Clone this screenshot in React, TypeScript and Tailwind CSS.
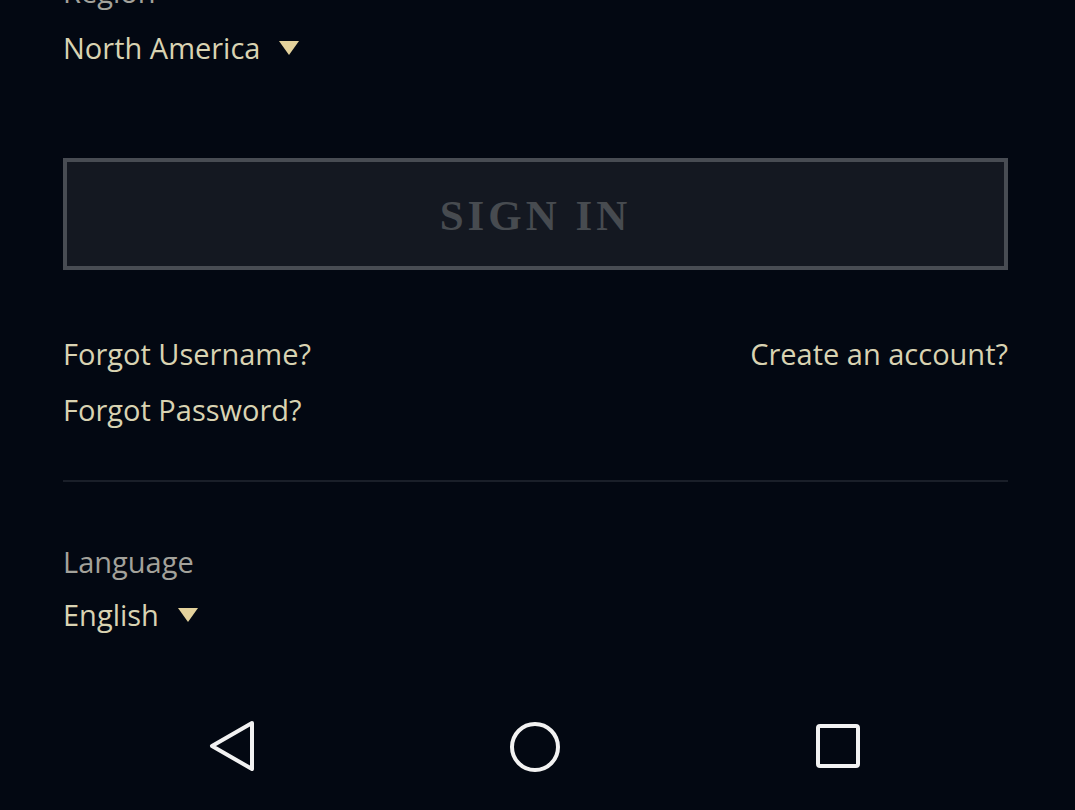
export default function App() {
  return (
    <div className="w-[1075px] h-[810px] bg-[#030812] overflow-hidden flex flex-col font-['Open_Sans',sans-serif]">
      <div className="pl-[63px] pr-[67px] -mt-[26px] flex-1">
        <div className="text-[29px] leading-[36px] text-[#a3a29b]">Region</div>
        <div className="mt-[20px] flex items-center gap-[18px] text-[29px] leading-[36px] text-[#d9d3b2]">
          <span>North America</span>
          <Caret />
        </div>

        <button className="mt-[92px] w-full h-[112px] bg-[#141821] border-4 border-[#484c53] flex items-center justify-center">
          <span className="mt-[4px] font-['Liberation_Serif',serif] font-bold text-[43px] tracking-[4px] text-[#474b50]">
            SIGN IN
          </span>
        </button>

        <div className="mt-[66px] flex justify-between text-[29px] leading-[36px] text-[#d9d3b2]">
          <div className="flex flex-col gap-[20px]">
            <span>Forgot Username?</span>
            <span>Forgot Password?</span>
          </div>
          <span>Create an account?</span>
        </div>

        <div className="mt-[52px] h-[2px] bg-[#1a1f29]" />

        <div className="mt-[62px] text-[29px] leading-[36px] text-[#a3a29b]">Language</div>
        <div className="mt-[17px] flex items-center gap-[18px] text-[29px] leading-[36px] text-[#d9d3b2]">
          <span>English</span>
          <Caret />
        </div>
      </div>

      <div className="h-[126px] shrink-0 flex justify-center items-center">
        <div className="grid grid-cols-3 w-[909px] -ml-[6px]">
          <div className="flex justify-center">
            <svg width="50" height="50" viewBox="0 0 50 50" fill="none" stroke="#f2f2f2" strokeWidth="4" strokeLinejoin="round" strokeLinecap="round">
              <path d="M45 2 L5 25 L45 48 Z" />
            </svg>
          </div>
          <div className="flex justify-center">
            <svg width="52" height="52" viewBox="0 0 52 52" fill="none" stroke="#f2f2f2" strokeWidth="4">
              <circle cx="26" cy="26" r="23" />
            </svg>
          </div>
          <div className="flex justify-center">
            <svg width="50" height="50" viewBox="0 0 50 50" fill="none" stroke="#f2f2f2" strokeWidth="4" strokeLinejoin="round">
              <rect x="5" y="5" width="40" height="40" rx="2" />
            </svg>
          </div>
        </div>
      </div>
    </div>
  );
}

function Caret() {
  return (
    <svg width="22" height="16" viewBox="0 0 22 16">
      <path d="M1 1 H21 L11 15 Z" fill="#e4d29c" />
    </svg>
  );
}
